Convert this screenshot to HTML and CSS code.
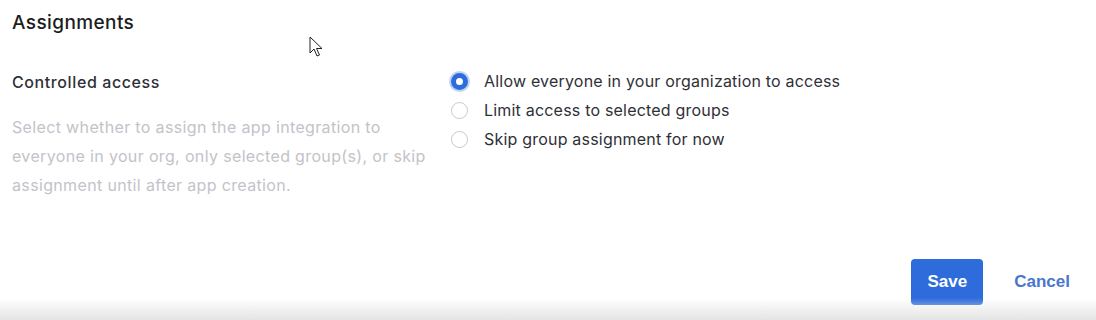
FILE: index.html
```html
<!DOCTYPE html>
<html lang="en">
<head>
    <meta charset="UTF-8">
    <title>Assignments</title>
    <link rel="stylesheet" href="styles.css">
</head>
<body>
    <div class="page">
        <h2 class="section-title">Assignments</h2>

        <div class="field-row">
            <div class="field-info">
                <h3 class="field-label">Controlled access</h3>
                <p class="field-help">Select whether to assign the app integration to everyone in your org, only selected group(s), or skip assignment until after app creation.</p>
            </div>

            <div class="radio-group">
                <label class="radio-option">
                    <span class="radio checked"></span>
                    Allow everyone in your organization to access
                </label>
                <label class="radio-option">
                    <span class="radio"></span>
                    Limit access to selected groups
                </label>
                <label class="radio-option">
                    <span class="radio"></span>
                    Skip group assignment for now
                </label>
            </div>
        </div>

        <div class="actions">
            <button class="btn-save" type="button">Save</button>
            <button class="btn-cancel" type="button">Cancel</button>
        </div>
    </div>

    <div class="bottom-shade"></div>

    <svg class="cursor" width="14" height="24" viewBox="0 0 14 24">
        <path d="M1 1 L1 17 L5 13 L8 20 L10.5 19 L7.5 12.5 L13 12.5 Z" fill="#fff" stroke="#222" stroke-width="1" stroke-linejoin="round"/>
    </svg>
</body>
</html>
```

FILE: styles.css
```css
body {
    font-family: Inter, "Open Sans", sans-serif;
    margin: 0;
    padding: 0;
    background-color: #ffffff;
    color: #1d1d21;
    width: 1096px;
    height: 320px;
    overflow: hidden;
    position: relative;
}

.page {
    padding: 12px 26px 0 12px;
}

.section-title {
    font-size: 19px;
    font-weight: 500;
    letter-spacing: 0.4px;
    margin: 0;
    line-height: 22px;
}

.field-row {
    display: flex;
    margin-top: 37px;
}

.field-info {
    width: 439px;
}

.field-label {
    font-size: 16px;
    font-weight: 500;
    letter-spacing: 0.6px;
    color: #2f3037;
    margin: 0;
    line-height: 22px;
}

.field-help {
    font-size: 16px;
    letter-spacing: 0.35px;
    color: #c3c3c9;
    margin: 20px 0 0 0;
    line-height: 29px;
    width: 420px;
}

.radio-group {
    display: flex;
    flex-direction: column;
    margin-top: -4px;
}

.radio-option {
    display: flex;
    align-items: center;
    font-size: 16px;
    letter-spacing: 0.2px;
    color: #2f3037;
    line-height: 29px;
}

.radio {
    width: 17px;
    height: 17px;
    border: 1.5px solid #c8c8cc;
    border-radius: 50%;
    margin-right: 16px;
    box-sizing: border-box;
}

.radio.checked {
    border: 5px solid #2e6cdc;
    background-color: #fff;
    box-shadow: 0 0 0 2px rgba(46, 108, 220, 0.3);
}

.actions {
    display: flex;
    justify-content: flex-end;
    align-items: center;
    margin-top: 59px;
}

.btn-save {
    font-family: "Liberation Sans", Arial, sans-serif;
    font-size: 17px;
    font-weight: bold;
    color: #fff;
    background-color: #2e6cdc;
    border: none;
    border-radius: 4px;
    width: 72px;
    height: 46px;
}

.btn-cancel {
    font-family: "Liberation Sans", Arial, sans-serif;
    font-size: 17px;
    font-weight: bold;
    color: #4a76cf;
    background: none;
    border: none;
    margin-left: 31px;
    padding: 0;
}

.bottom-shade {
    position: absolute;
    left: 0;
    right: 0;
    bottom: 0;
    height: 22px;
    background: linear-gradient(rgba(255, 255, 255, 0), #e4e4e4);
}

.cursor {
    position: absolute;
    left: 309px;
    top: 36px;
}
```
